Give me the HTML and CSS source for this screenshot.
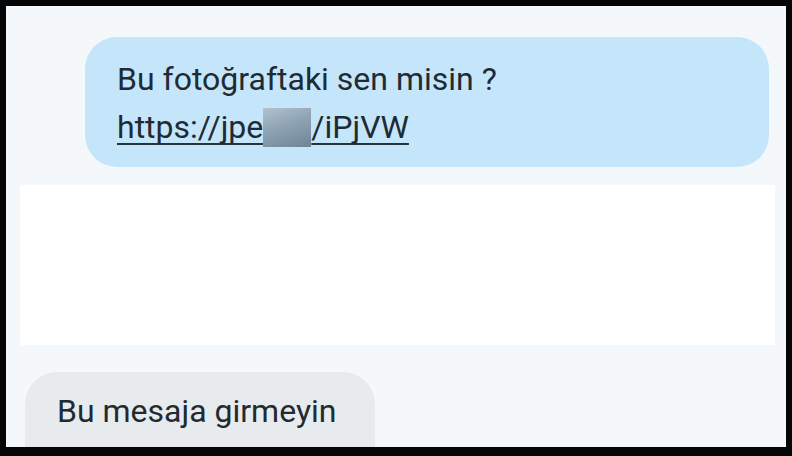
FILE: index.html
```html
<!DOCTYPE html>
<html lang="tr">
<head>
<meta charset="utf-8">
<title>Mesaj</title>
<link rel="stylesheet" href="styles.css">
</head>
<body>
<div class="frame">
  <div class="thread">
    <div class="row row-out">
      <div class="bubble bubble-out">
        <p class="line">Bu fotoğraftaki sen misin ?</p>
        <p class="line link"><span class="url">https://jpe<span class="blur"></span>/iPjVW</span></p>
      </div>
    </div>
    <div class="preview"></div>
    <div class="row row-in">
      <div class="bubble bubble-in">
        <p class="line">Bu mesaja girmeyin</p>
      </div>
    </div>
  </div>
</div>
</body>
</html>
```

FILE: styles.css
```css
* { box-sizing: border-box; }
html, body { margin: 0; padding: 0; }
body {
  width: 792px;
  height: 456px;
  background: #000;
  font-family: Roboto, "Noto Sans", Arial, sans-serif;
  overflow: hidden;
}
.frame {
  width: 792px;
  height: 456px;
  border-style: solid;
  border-color: #050505;
  border-width: 6px 6px 9px 6px;
  background: #f5f8fa;
  overflow: hidden;
}
.thread {
  display: flex;
  flex-direction: column;
  height: 100%;
}
.thread > * { flex-shrink: 0; }
.row { display: flex; }
.row-out {
  justify-content: flex-end;
  padding: 31px 17px 0 79px;
}
.bubble-out {
  flex: 1;
  height: 130px;
  background: #c4e5fa;
  border-radius: 32px;
  padding: 18px 32px 0 32px;
}
.line {
  margin: 0;
  font-size: 32px;
  line-height: 48px;
  color: #1f2b33;
  white-space: nowrap;
}
.url {
  text-decoration: underline;
  text-decoration-thickness: 2px;
  text-underline-offset: 5px;
  text-decoration-color: #24343e;
  text-decoration-skip-ink: none;
}
.blur {
  display: inline-block;
  width: 48px;
  height: 39px;
  vertical-align: -9px;
  background: linear-gradient(160deg, #b3c3cf 0%, #8ea3b3 45%, #6e8596 100%);
}
.preview {
  margin: 18px 11px 0 14px;
  height: 160px;
  background: #ffffff;
}
.row-in {
  padding: 27px 0 0 19px;
}
.bubble-in {
  width: 350px;
  height: 110px;
  background: #e8ebee;
  border-radius: 32px;
  padding: 15px 0 0 32px;
}
.bubble-in .line { color: #222a30; }
```
